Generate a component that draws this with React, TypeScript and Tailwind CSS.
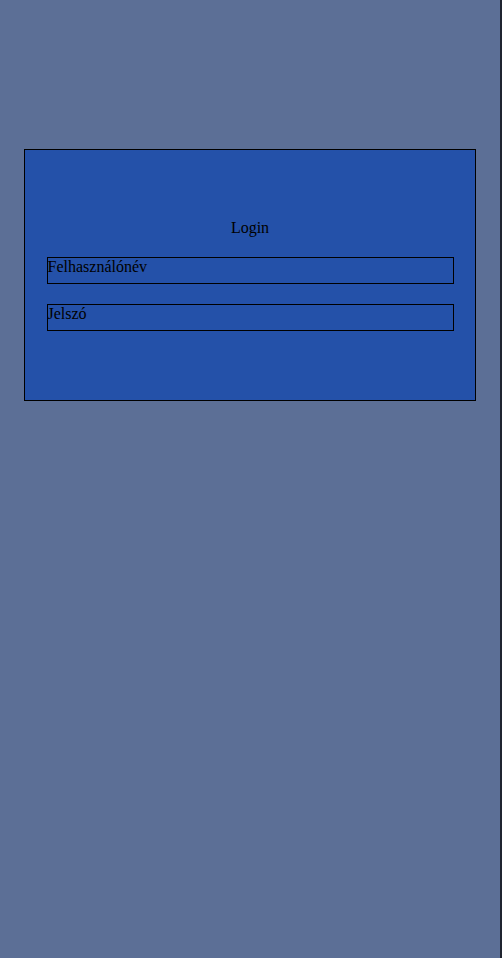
export default function App() {
  return (
    <div
      className="min-h-screen bg-[#5c6f96] border-r-2 border-[#1f2430] pt-[149px]"
      style={{ fontFamily: '"Liberation Serif", "Times New Roman", serif' }}
    >
      <form
        className="mx-auto w-[452px] h-[252px] border border-black bg-[#2451a9] flex flex-col items-center justify-center text-base text-black"
        onSubmit={(e) => e.preventDefault()}
      >
        <h1 className="text-base font-normal leading-[18px] m-0">Login</h1>
        <input
          type="text"
          placeholder="Felhasználónév"
          className="mt-5 w-[407px] h-[27px] border border-black bg-transparent px-0 pt-0 pb-[7px] outline-none placeholder:text-black leading-[18px]"
        />
        <input
          type="password"
          placeholder="Jelszó"
          className="mt-5 w-[407px] h-[27px] border border-black bg-transparent px-0 pt-0 pb-[7px] outline-none placeholder:text-black leading-[18px]"
        />
      </form>
    </div>
  );
}
